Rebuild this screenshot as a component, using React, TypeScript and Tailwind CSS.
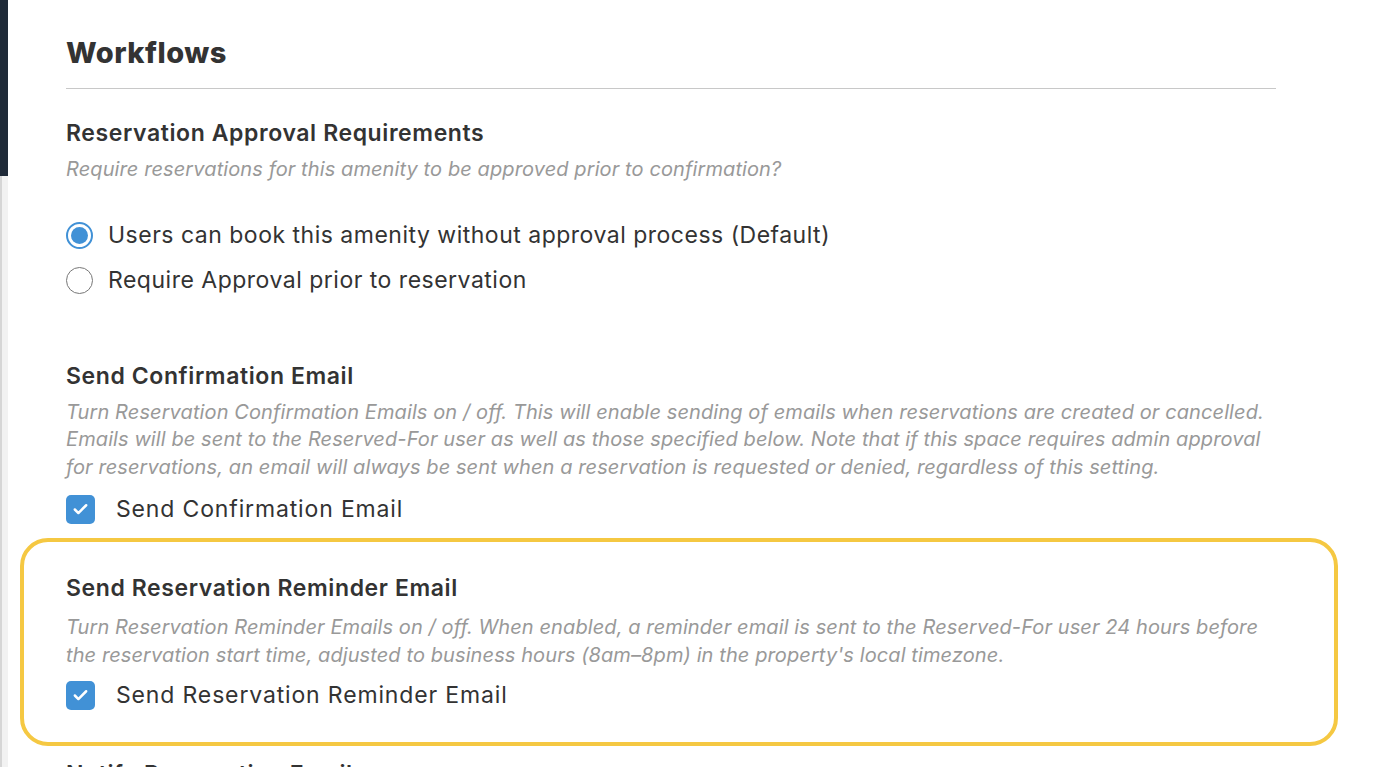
import { Check } from 'lucide-react';

const font = { fontFamily: 'Inter, "Noto Sans", sans-serif' };

function Radio({ checked, label }: { checked?: boolean; label: string }) {
  return (
    <label className="flex items-center h-[45px]">
      <span
        className={
          checked
            ? 'w-[27px] h-[27px] rounded-full border-2 border-[#4191d6] flex items-center justify-center'
            : 'w-[27px] h-[27px] rounded-full border-[1.5px] border-[#777] flex items-center justify-center'
        }
      >
        {checked && <span className="w-[17px] h-[17px] rounded-full bg-[#4191d6]" />}
      </span>
      <span className="ml-[15px] text-[23px] leading-[32px] tracking-[0.5px] text-[#333]">{label}</span>
    </label>
  );
}

function Checkbox({ label }: { label: string }) {
  return (
    <label className="flex items-center">
      <span className="w-[29px] h-[29px] rounded-[5px] bg-[#4191d6] flex items-center justify-center">
        <Check className="w-[17px] h-[17px] text-white" strokeWidth={3.5} />
      </span>
      <span className="ml-[21px] text-[23px] leading-[32px] tracking-[0.85px] text-[#333]">{label}</span>
    </label>
  );
}

function Desc({ children }: { children: React.ReactNode }) {
  return <p className="text-[20px] italic tracking-[0.1px] text-[#999] leading-[27.5px]">{children}</p>;
}

function Heading({ children, className = '' }: { children: React.ReactNode; className?: string }) {
  return (
    <h2 className={'text-[23px] font-semibold tracking-[0.6px] text-[#333] leading-[32px] ' + className}>{children}</h2>
  );
}

export default function App() {
  return (
    <div className="w-[1391px] h-[767px] overflow-hidden bg-white flex" style={font}>
      <div className="w-[8px] flex flex-col shrink-0">
        <div className="h-[176px] bg-[#1f2a38]" />
        <div className="flex-1 bg-[#f2f2f2] border-l-2 border-[#d6d6d6]" />
      </div>
      <div className="flex-1 pl-[58px] pr-[115px]">
        <h1 className="pt-[34px] text-[29px] font-extrabold tracking-[0.5px] text-[#333] leading-[38px]">Workflows</h1>
        <div className="mt-[16px] border-t border-[#c8c8c8]" />

        <Heading className="mt-[28px]">Reservation Approval Requirements</Heading>
        <div className="mt-[7px]">
          <Desc>Require reservations for this amenity to be approved prior to confirmation?</Desc>
        </div>

        <div className="mt-[29px]">
          <Radio checked label="Users can book this amenity without approval process (Default)" />
          <Radio label="Require Approval prior to reservation" />
        </div>

        <Heading className="mt-[57px]">Send Confirmation Email</Heading>
        <div className="mt-[7px]">
          <Desc>
            Turn Reservation Confirmation Emails on / off. This will enable sending of emails when reservations are created or cancelled.
            <br />
            Emails will be sent to the Reserved-For user as well as those specified below. Note that if this space requires admin approval
            <br />
            for reservations, an email will always be sent when a reservation is requested or denied, regardless of this setting.
          </Desc>
        </div>
        <div className="mt-[12px]">
          <Checkbox label="Send Confirmation Email" />
        </div>

        <div className="mt-[13px] -ml-[46px] -mr-[62px] border-[4px] border-[#f5c842] rounded-[28px] pl-[42px] pr-[20px] pt-[30px] pb-[31px]">
          <Heading>Send Reservation Reminder Email</Heading>
          <div className="mt-[10px]">
            <Desc>
              Turn Reservation Reminder Emails on / off. When enabled, a reminder email is sent to the Reserved-For user 24 hours before
              <br />
              the reservation start time, adjusted to business hours (8am–8pm) in the property's local timezone.
            </Desc>
          </div>
          <div className="mt-[10px]">
            <Checkbox label="Send Reservation Reminder Email" />
          </div>
        </div>

        <Heading className="mt-[12px]">Notify Reservation Emails</Heading>
      </div>
    </div>
  );
}
